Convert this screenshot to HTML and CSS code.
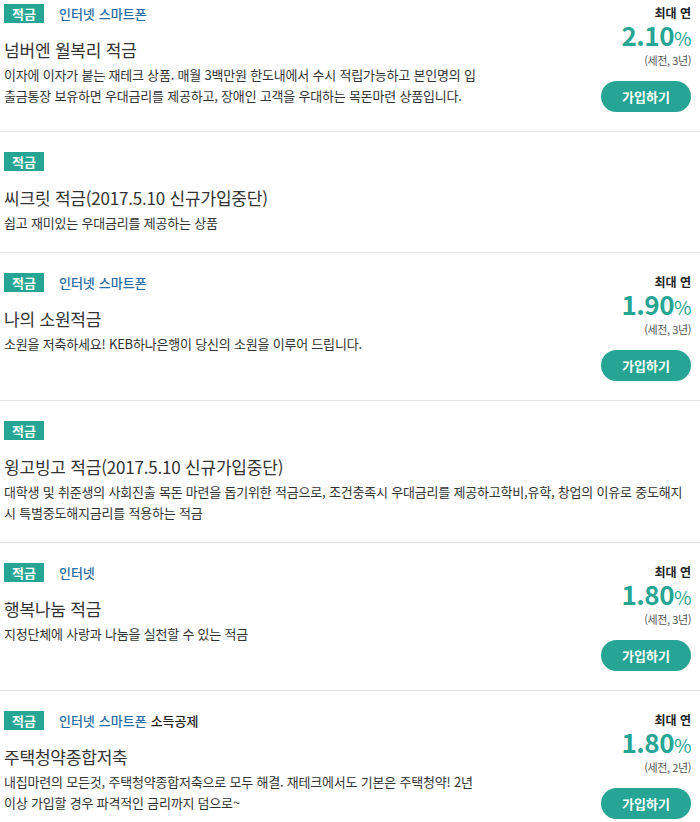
FILE: index.html
```html
<!DOCTYPE html>
<html lang="ko">
<head>
  <meta charset="UTF-8">
  <meta name="viewport" content="width=device-width, initial-scale=1.0">
  <title>적금 상품</title>
  <link rel="stylesheet" href="styles.css">
</head>
<body>
  <ul class="list">
    <li class="item">
      <div class="info">
        <div class="tags"><span class="badge">적금</span><span class="tag">인터넷</span><span class="tag">스마트폰</span></div>
        <h3 class="title">넘버엔 월복리 적금</h3>
        <p class="desc">이자에 이자가 붙는 재테크 상품. 매월 3백만원 한도내에서 수시 적립가능하고 본인명의 입출금통장 보유하면 우대금리를 제공하고, 장애인 고객을 우대하는 목돈마련 상품입니다.</p>
      </div>
      <div class="rate">
        <span class="max">최대 연</span>
        <span class="num">2.10<small>%</small></span>
        <span class="note">(세전, 3년)</span>
        <button class="join">가입하기</button>
      </div>
    </li>
    <li class="item">
      <div class="info">
        <div class="tags"><span class="badge">적금</span></div>
        <h3 class="title">씨크릿 적금(2017.5.10 신규가입중단)</h3>
        <p class="desc">쉽고 재미있는 우대금리를 제공하는 상품</p>
      </div>
    </li>
    <li class="item">
      <div class="info">
        <div class="tags"><span class="badge">적금</span><span class="tag">인터넷</span><span class="tag">스마트폰</span></div>
        <h3 class="title">나의 소원적금</h3>
        <p class="desc">소원을 저축하세요! KEB하나은행이 당신의 소원을 이루어 드립니다.</p>
      </div>
      <div class="rate">
        <span class="max">최대 연</span>
        <span class="num">1.90<small>%</small></span>
        <span class="note">(세전, 3년)</span>
        <button class="join">가입하기</button>
      </div>
    </li>
    <li class="item">
      <div class="info">
        <div class="tags"><span class="badge">적금</span></div>
        <h3 class="title">윙고빙고 적금(2017.5.10 신규가입중단)</h3>
        <p class="desc">대학생 및 취준생의 사회진출 목돈 마련을 돕기위한 적금으로, 조건충족시 우대금리를 제공하고학비,유학, 창업의 이유로 중도해지시 특별중도해지금리를 적용하는 적금</p>
      </div>
    </li>
    <li class="item">
      <div class="info">
        <div class="tags"><span class="badge">적금</span><span class="tag">인터넷</span></div>
        <h3 class="title">행복나눔 적금</h3>
        <p class="desc">지정단체에 사랑과 나눔을 실천할 수 있는 적금</p>
      </div>
      <div class="rate">
        <span class="max">최대 연</span>
        <span class="num">1.80<small>%</small></span>
        <span class="note">(세전, 3년)</span>
        <button class="join">가입하기</button>
      </div>
    </li>
    <li class="item">
      <div class="info">
        <div class="tags"><span class="badge">적금</span><span class="tag">인터넷</span><span class="tag">스마트폰</span><span class="tag dark">소득공제</span></div>
        <h3 class="title">주택청약종합저축</h3>
        <p class="desc">내집마련의 모든것, 주택청약종합저축으로 모두 해결. 재테크에서도 기본은 주택청약! 2년<br>이상 가입할 경우 파격적인 금리까지 덤으로~</p>
      </div>
      <div class="rate">
        <span class="max">최대 연</span>
        <span class="num">1.80<small>%</small></span>
        <span class="note">(세전, 2년)</span>
        <button class="join">가입하기</button>
      </div>
    </li>
  </ul>
</body>
</html>
```

FILE: styles.css
```css
body { margin: 0; font-family: "Noto Sans CJK KR", "Noto Sans", sans-serif; background: #fff; color: #333; }
.list { list-style: none; margin: -16px 0 0; padding: 0; }
.item { display: flex; padding: 20px 9px 19px 4px; border-bottom: 1px solid #e3e3e3; }
.info { flex: 1; min-width: 0; }
.info:has(+ .rate) { flex: 0 1 478px; }
.tags { display: flex; align-items: center; height: 19px; }
.badge { display: inline-block; height: 19px; line-height: 19px; padding: 0 8px; background: #27a594; color: #fff; font-size: 13px; font-weight: bold; margin-right: 15px; }
.tag { font-size: 13px; font-weight: 500; color: #2a6ca6; margin-right: 4px; }
.tag.dark { color: #222; }
.title { margin: 14px 0 0; font-size: 17px; font-weight: normal; line-height: 26px; letter-spacing: -0.2px; color: #333; }
.desc { margin: 1px 0 0; font-size: 13px; line-height: 21px; letter-spacing: -0.2px; color: #333; }
.rate { display: flex; flex-direction: column; align-items: flex-end; width: 90px; flex-shrink: 0; margin-left: auto; }
.max { font-size: 12px; font-weight: bold; line-height: 18px; color: #222; }
.num { font-size: 26px; font-weight: bold; line-height: 25px; color: #27a594; letter-spacing: -0.5px; }
.num small { font-size: 19px; font-weight: normal; }
.note { font-size: 11px; line-height: 20px; color: #555; letter-spacing: -0.4px; }
.join { margin-top: 11px; width: 90px; height: 31px; border: none; border-radius: 16px; background: #27a594; color: #fff; font-family: inherit; font-size: 13px; font-weight: bold; cursor: pointer; }
```
